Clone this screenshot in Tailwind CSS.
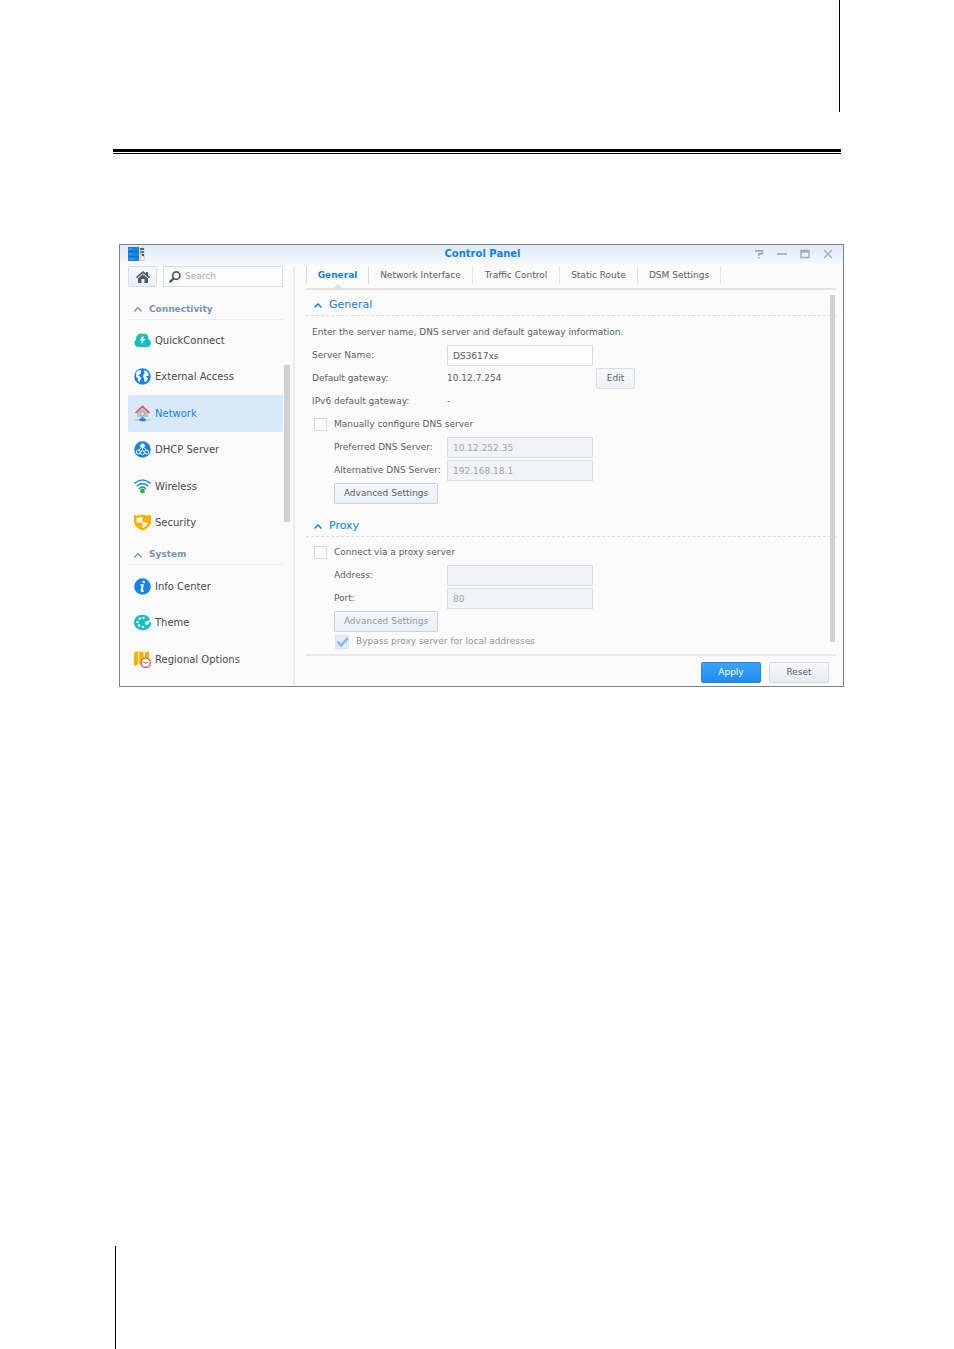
<!DOCTYPE html>
<html lang="en">
<head>
<meta charset="utf-8">
<meta name="viewport" content="width=device-width, initial-scale=1">
<title>Control Panel</title>
<script src="https://cdn.jsdelivr.net/npm/@tailwindcss/browser@4"></script>
</head>
<body class="flex min-h-screen flex-col bg-white font-['DejaVu_Sans',sans-serif] text-[9px] text-[#5a6066]">
<header class="pr-[113px] pl-[113px]">
  <div class="h-28 border-r border-black mr-px"></div>
  <div class="mt-[37px] h-[5px] border-t-3 border-b border-black"></div>
</header>

<main class="mt-[90px] mr-[110px] ml-[119px] flex flex-col border border-[#808085] bg-[#fbfbfb]">
  <div class="grid h-[21px] grid-cols-3 items-center bg-linear-to-b from-[#dceafa] to-[#fbfbfb] pr-[10px] pb-[4px] pl-2">
    <svg class="h-4 w-[18px]" viewBox="0 0 18 16"><path fill="#1583e0" d="M0 1h11v14H0z"/><path stroke="#0d64bd" d="M1 5.500h9M1 10.500h9"/><path stroke="#52b6f7" d="M1 3h3M1 8h3M1 13h5"/><path fill="#d9dde0" d="M11 1h6v14h-6z"/><path fill="#536674" d="M12 2h4v2h-4z"/><path fill="#42a85b" d="M12 5h2v2h-2z"/><path fill="#287bc1" d="M14 5h2v2h-2z"/><path fill="#e2c34e" d="M12 7h2v2h-2z"/><path fill="#4b5963" d="M14 8h2v2h-2z"/><circle cx="14.500" cy="12.500" r="2" fill="#f7f8f9" stroke="#bac1c7" stroke-width=".6"/></svg>
    <h1 class="pl-1 text-center text-[10px] font-bold text-[#1580e4]">Control Panel</h1>
    <div class="flex justify-end gap-[13px] text-[#a3abb5]">
      <button aria-label="Help"><svg class="size-[10px]" viewBox="0 0 10 10" fill="none" stroke="currentColor" stroke-width="1.700"><path d="M1 1.800h7.300v3H4.800v2M4.800 8v1.500"/></svg></button>
      <button aria-label="Minimize"><svg class="size-[10px]" viewBox="0 0 10 10" stroke="currentColor" stroke-width="1.600"><path d="M0 5h10"/></svg></button>
      <button aria-label="Maximize"><svg class="size-[10px]" viewBox="0 0 10 10" fill="none" stroke="currentColor" stroke-width="1.400"><path d="M1 1.500h8v7H1z"/><path stroke-width="2.200" d="M1 2.500h8"/></svg></button>
      <button aria-label="Close"><svg class="size-[10px]" viewBox="0 0 10 10" stroke="currentColor" stroke-width="1.400"><path d="m1 1 8 8M9 1 1 9"/></svg></button>
    </div>
  </div>

  <div class="flex">
    <aside class="relative w-[175px] shrink-0 border-r-2 border-[#ececec] pr-[10px] pl-2">
      <div class="flex gap-[6px]">
        <button aria-label="Home" class="flex h-[21px] w-[29px] items-center justify-center rounded-[2px] border border-[#d5dde8] bg-linear-to-b from-[#f7fafd] to-[#e9eff6]"><svg class="h-3 w-[14px]" viewBox="0 0 14 12" fill="#505a66"><path d="M7 0 0 6l1 1.300 6-5 6 5L14 6l-2-1.700V1h-2v1.600z"/><path d="m7 3.300-5 4.200V12h3.500V8h3v4H12V7.500z"/></svg></button>
        <label class="flex h-[21px] min-w-0 flex-1 items-center gap-1 border border-[#d5dde6] bg-[#fcfcfc] pl-[5px]">
          <svg class="size-3 shrink-0" viewBox="0 0 12 12" fill="none" stroke="#505a66"><circle cx="7.300" cy="4.600" r="3.700" stroke-width="1.700"/><path stroke-width="2.300" d="m4.500 7.500-3.700 3.700"/></svg>
          <input aria-label="Search" type="text" placeholder="Search" class="w-full min-w-0 bg-transparent outline-none placeholder:text-[#a4a8ad]">
        </label>
      </div>

      <h2 class="mt-[11px] flex h-[22px] items-center gap-[7px] border-b border-[#e9ecef] pt-[2px] pl-[6px] font-bold text-[#7593b1]">
        <svg class="h-[5px] w-2" viewBox="0 0 8 5" fill="none" stroke="currentColor" stroke-width="1.300"><path d="m.5 4.500 3.500-4 3.500 4"/></svg>Connectivity</h2>
      <nav class="mt-[2px] grid h-[219px] grid-rows-6 text-[10px] text-[#454b52]">
        <a href="#" class="flex items-center gap-1 pl-[6px]"><svg class="size-[17px]" viewBox="0 0 17 17"><path fill="#19bdb9" d="M4.300 15C.5 15-.8 10 1.800 8c0-5 3.900-7.500 7.200-6 4-1 5.800 2 5.400 5 4 2 2.800 8-1.200 8z"/><path fill="#fff" d="m8 4.500-2 4h2l-.7 4L11.300 7H9l1.300-2.500z"/></svg>QuickConnect</a>
        <a href="#" class="flex items-center gap-1 pl-[6px]"><svg class="size-[17px]" viewBox="0 0 17 17"><circle cx="8.500" cy="8.500" r="8.300" fill="#1583ea"/><path fill="#fff" d="m2.600 4 2.700-2 2 .6-.8 1.400.7 1.500-1.800.9-1.200 1.300 2.300 1.200 1 1.600-1.400 1.800-.5 2.200-1.400-1.500-.3-2.800-1.600-1.300-.4-2.500zM10 2l3.200 1.800 1.800 3-1 1.300-1.500-.2-.3 1.400 1.500.6-.3 2.300-2.300 2-1-1.400.2-2.500L9 9l.3-2.200 1.500-1-.7-1.200z"/></svg>External Access</a>
        <a href="#" aria-current="page" class="flex items-center gap-1 rounded-[2px] bg-[#d8eafa] pl-[6px] text-[#1580e4]"><svg class="size-[17px]" viewBox="0 0 17 17"><path fill="#b9bfc7" d="M3 7.500 8.500 3 14 7.500V12H3z"/><circle cx="8.500" cy="8.800" r="2" fill="#dcecf9" stroke="#9ea8b2"/><path fill="none" stroke="#e8504d" stroke-width="1.700" d="M1.500 8 8.500 1.500l7 6.500"/><path stroke="#b5bbc3" stroke-width="1.300" d="M0 15h17"/><path fill="#1583ea" d="M7.500 12h2v1.500H11.500v2.700h-6v-2.700h2z"/></svg>Network</a>
        <a href="#" class="flex items-center gap-1 pl-[6px]"><svg class="size-[17px]" viewBox="0 0 17 17" fill="none" stroke="#fff"><circle cx="8.500" cy="8.500" r="8.300" fill="#1583ea" stroke="none"/><circle cx="8.500" cy="4.800" r="1.900" fill="#fff"/><path d="M8.500 6v3.500M7 6.500 5 9M10 6.500 12 9"/><circle cx="4.300" cy="11" r="2"/><circle cx="8.500" cy="11.700" r="2"/><circle cx="12.700" cy="11" r="2"/></svg>DHCP Server</a>
        <a href="#" class="flex items-center gap-1 pl-[6px]"><svg class="size-[17px]" viewBox="0 0 17 17" fill="none" stroke="#2790ec" stroke-width="1.600"><path d="M.5 5.500Q8.500-1.500 16.500 5.500M2.800 8.200q5.700-5 11.400 0M5 10.800q3.500-3.300 7 0"/><circle cx="8.500" cy="13" r="2.400" fill="#35b51b" stroke="none"/></svg>Wireless</a>
        <a href="#" class="flex items-center gap-1 pl-[6px]"><svg class="size-[17px]" viewBox="0 0 17 17"><path fill="#f3b200" d="M0 1q4.500 1 8.500-.5Q12.500 2 17 1v7.500q-1 5.500-8.500 8Q1 14 0 8.500z"/><path fill="#fff" d="M8.500 3v5.500H14q-1 3.500-5.500 5.500V8.500H2.700L2.500 3.800q3 .2 6-.8"/></svg>Security</a>
      </nav>

      <h2 class="mt-[3px] flex h-[21px] items-center gap-[7px] border-b border-[#e9ecef] pt-[2px] pl-[6px] font-bold text-[#7593b1]">
        <svg class="h-[5px] w-2" viewBox="0 0 8 5" fill="none" stroke="currentColor" stroke-width="1.300"><path d="m.5 4.500 3.500-4 3.500 4"/></svg>System</h2>
      <nav class="mt-[3px] grid h-[110px] grid-rows-3 text-[10px] text-[#454b52]">
        <a href="#" class="flex items-center gap-1 pl-[6px]"><svg class="size-[17px]" viewBox="0 0 17 17"><circle cx="8.500" cy="8.500" r="8.300" fill="#1583ea"/><circle cx="9.700" cy="4" r="1.300" fill="#fff"/><path fill="none" stroke="#fff" stroke-width="1.800" d="M6.500 7.200h2.300l-1.300 5.300q-.2 1 2.200.1"/></svg>Info Center</a>
        <a href="#" class="flex items-center gap-1 pl-[6px]"><svg class="size-[17px]" viewBox="0 0 17 17"><path fill="#19bdc0" d="M8.500.8C3.500.8 0 4.300 0 8.500s3.500 7.700 8.500 7.700c4.500 0 8-2.500 8.500-6.500.2-1.800-1.200-2.200-2-1.700.5 2-1 3.300-2.700 2.800-2.300-.8-1.800-3.600.4-3.600 2 0 3.500-1 2.800-2.700C14.300 2 11.500.8 8.500.8"/><g fill="#fff"><circle cx="9.500" cy="4" r="1.200"/><circle cx="5.800" cy="4.800" r="1.200"/><circle cx="3.500" cy="8" r="1.200"/><circle cx="5" cy="11.500" r="1.200"/><circle cx="9" cy="13" r="1.300"/></g></svg>Theme</a>
        <a href="#" class="flex items-center gap-1 pl-[6px]"><svg class="size-[17px]" viewBox="0 0 17 17"><path fill="#f3b200" d="M0 1.500 4.300 0v13L0 15zM5.300 0l4.400 1.500V15l-4.400-2zM10.700 1.500 15 0v12l-4.300 2z"/><circle cx="11.700" cy="11.700" r="4.600" fill="#fff" stroke="#e9555d" stroke-width="1.400"/><path fill="none" stroke="#666d75" d="m9 10.500 2.700 1.700 2.500-1.200"/></svg>Regional Options</a>
      </nav>
      <div class="absolute top-[99px] right-[3px] h-[157px] w-[6px] bg-[#cfd1d4]"></div>
    </aside>

    <section class="relative flex min-w-0 flex-1 flex-col pr-[7px] pl-[11px]">
      <div role="tablist" class="flex h-[24px] items-start border-b-2 border-[#e2e4e6] *:h-[18px] *:pt-[2px]">
        <button role="tab" aria-selected="true" class="relative w-[62px] border-l border-[#d5dde6] font-bold text-[#1580e4]">General
          <svg class="absolute top-[17px] left-[26px] h-[6px] w-[10px]" viewBox="0 0 10 6"><path fill="#dfe1e3" d="m0 6 5-5 5 5z"/></svg></button>
        <button role="tab" class="w-[104px] border-l border-[#d5dde6]">Network Interface</button>
        <button role="tab" class="w-[87px] border-l border-[#e0e6ee]">Traffic Control</button>
        <button role="tab" class="w-[78px] border-l border-[#e0e6ee]">Static Route</button>
        <button role="tab" class="w-[84px] border-x border-[#e0e6ee]">DSM Settings</button>
      </div>

      <h2 class="mt-px flex h-[25px] items-center gap-[7px] border-b border-dashed border-[#d8dce6] pt-[5px] pl-2 text-[11px] text-[#1580e4]">
        <svg class="h-[5px] w-2" viewBox="0 0 8 5" fill="none" stroke="currentColor" stroke-width="1.500"><path d="m.5 4.500 3.500-3.500 3.500 3.500"/></svg>General</h2>
      <div class="flex flex-col pt-[5px] pl-[6px] *:h-[23px] *:items-center">
        <p class="flex">Enter the server name, DNS server and default gateway information.</p>
        <div class="flex"><label for="server" class="w-[135px]">Server Name:</label><input id="server" type="text" value="DS3617xs" class="h-[21px] w-[146px] border border-[#d5dde6] bg-[#fcfcfc] px-[5px]"></div>
        <div class="flex"><span class="w-[135px]">Default gateway:</span><span class="w-[149px]">10.12.7.254</span><button class="h-[21px] w-[39px] rounded-[2px] border border-[#d5dde8] bg-linear-to-b from-[#f6f9fc] to-[#edf2f7]">Edit</button></div>
        <div class="flex"><span class="w-[135px]">IPv6 default gateway:</span><span>-</span></div>
        <label class="flex gap-[7px] pl-[2px]"><input type="checkbox" class="size-[13px] appearance-none border border-[#d3dbe5] bg-[#fcfcfc]">Manually configure DNS server</label>
        <div class="flex pl-[22px]"><label for="dns1" class="w-[113px] whitespace-nowrap">Preferred DNS Server:</label><input id="dns1" type="text" value="10.12.252.35" disabled class="h-[21px] w-[146px] border border-[#d8dde6] bg-[#f2f3f5] px-[5px] text-[#a0a5ac]"></div>
        <div class="flex pl-[22px]"><label for="dns2" class="w-[113px] whitespace-nowrap">Alternative DNS Server:</label><input id="dns2" type="text" value="192.168.18.1" disabled class="h-[21px] w-[146px] border border-[#d8dde6] bg-[#f2f3f5] px-[5px] text-[#a0a5ac]"></div>
        <div class="flex pl-[22px]"><button class="h-[21px] w-[104px] rounded-[2px] border border-[#c9d2df] bg-linear-to-b from-[#f4f8fd] to-[#eaeff6]">Advanced Settings</button></div>
      </div>

      <h2 class="mt-[7px] flex h-[25px] items-center gap-[7px] border-b border-dashed border-[#d8dce6] pt-[5px] pl-2 text-[11px] text-[#1580e4]">
        <svg class="h-[5px] w-2" viewBox="0 0 8 5" fill="none" stroke="currentColor" stroke-width="1.500"><path d="m.5 4.500 3.500-3.500 3.500 3.500"/></svg>Proxy</h2>
      <div class="flex flex-col border-b-2 border-[#e8e9ea] pt-1 pl-[6px] *:h-[23px] *:items-center">
        <label class="flex gap-[7px] pl-[2px]"><input type="checkbox" class="size-[13px] appearance-none border border-[#d3dbe5] bg-[#fcfcfc]">Connect via a proxy server</label>
        <div class="flex pl-[22px]"><label for="addr" class="w-[113px]">Address:</label><input id="addr" type="text" disabled class="h-[21px] w-[146px] border border-[#d8dde6] bg-[#f2f3f5] px-[5px]"></div>
        <div class="flex pl-[22px]"><label for="port" class="w-[113px]">Port:</label><input id="port" type="text" value="80" disabled class="h-[21px] w-[146px] border border-[#d8dde6] bg-[#f2f3f5] px-[5px] text-[#a0a5ac]"></div>
        <div class="flex pl-[22px]"><button disabled class="h-[21px] w-[104px] rounded-[2px] border border-[#c9d2df] bg-linear-to-b from-[#f4f8fd] to-[#eaeff6] text-[#92979f]">Advanced Settings</button></div>
        <label class="flex h-[21px]! gap-[7px] pb-[3px] pl-[23px] text-[#92979f]"><span class="grid"><input type="checkbox" checked disabled class="col-start-1 row-start-1 size-[14px] appearance-none border border-[#dbe3ec] bg-[#e6ecf2]"><svg class="col-start-1 row-start-1 size-[14px]" viewBox="0 0 14 14" fill="none" stroke="#83bef1" stroke-width="2.600"><path d="m2.500 6.500 3.500 4L13 3"/></svg></span>Bypass proxy server for local addresses</label>
      </div>
      <div class="flex justify-end gap-2 pt-[6px] pr-[7px] pb-[3px]">
        <button class="h-[21px] w-[60px] rounded-[2px] border border-[#2388df] bg-linear-to-b from-[#3aa2f7] to-[#1f8cec] text-white">Apply</button>
        <button class="h-[21px] w-[60px] rounded-[2px] border border-[#d2d9e4] bg-linear-to-b from-[#f4f7fc] to-[#e9eef4]">Reset</button>
      </div>
      <div class="absolute top-[29px] right-2 h-[347px] w-[5px] bg-[#cfd1d4]"></div>
    </section>
  </div>
</main>

<footer class="mt-auto ml-[115px] h-[103px] border-l border-black"></footer>
</body>
</html>
